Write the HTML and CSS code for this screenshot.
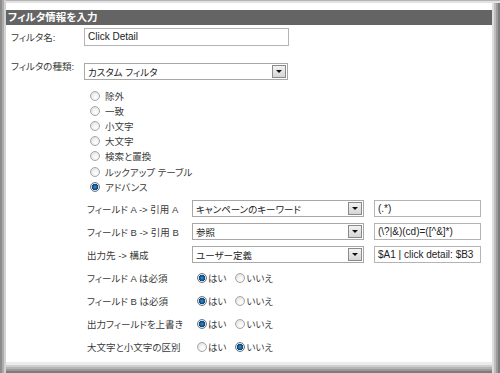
FILE: index.html
```html
<!DOCTYPE html>
<html lang="ja">
<head>
  <meta charset="UTF-8" />
  <title>フィルタ情報を入力</title>
  <link rel="stylesheet" href="styles.css">
</head>
<body>
  <div class="frame">
    <div class="panel">
      <div class="title">フィルタ情報を入力</div>

      <div class="field name-row">
        <span class="label">フィルタ名:</span>
        <div class="textbox wide">Click Detail</div>
      </div>

      <div class="field type-row">
        <span class="label">フィルタの種類:</span>
        <div class="select wide"><span>カスタム フィルタ</span><i class="drop"></i></div>
      </div>

      <ul class="types">
        <li><span class="radio"></span>除外</li>
        <li><span class="radio"></span>一致</li>
        <li><span class="radio"></span>小文字</li>
        <li><span class="radio"></span>大文字</li>
        <li><span class="radio"></span>検索と置換</li>
        <li><span class="radio"></span>ルックアップ テーブル</li>
        <li><span class="radio on"></span>アドバンス</li>
      </ul>

      <div class="advanced">
        <div class="adv-row">
          <span class="adv-label">フィールド A -&gt; 引用 A</span>
          <div class="select mid"><span>キャンペーンのキーワード</span><i class="drop"></i></div>
          <div class="textbox short">(.*)</div>
        </div>
        <div class="adv-row">
          <span class="adv-label">フィールド B -&gt; 引用 B</span>
          <div class="select mid"><span>参照</span><i class="drop"></i></div>
          <div class="textbox short">(\?|&amp;)(cd)=([^&amp;]*)</div>
        </div>
        <div class="adv-row">
          <span class="adv-label">出力先 -&gt; 構成</span>
          <div class="select mid"><span>ユーザー定義</span><i class="drop"></i></div>
          <div class="textbox short">$A1 | click detail: $B3</div>
        </div>
        <div class="adv-row">
          <span class="adv-label">フィールド A は必須</span>
          <div class="choices">
            <span class="choice"><span class="radio on"></span>はい</span>
            <span class="choice"><span class="radio"></span>いいえ</span>
          </div>
        </div>
        <div class="adv-row">
          <span class="adv-label">フィールド B は必須</span>
          <div class="choices">
            <span class="choice"><span class="radio on"></span>はい</span>
            <span class="choice"><span class="radio"></span>いいえ</span>
          </div>
        </div>
        <div class="adv-row">
          <span class="adv-label">出力フィールドを上書き</span>
          <div class="choices">
            <span class="choice"><span class="radio on"></span>はい</span>
            <span class="choice"><span class="radio"></span>いいえ</span>
          </div>
        </div>
        <div class="adv-row">
          <span class="adv-label">大文字と小文字の区別</span>
          <div class="choices">
            <span class="choice"><span class="radio"></span>はい</span>
            <span class="choice"><span class="radio on"></span>いいえ</span>
          </div>
        </div>
      </div>
    </div>
  </div>
</body>
</html>
```

FILE: styles.css
```css
* {
  margin: 0;
  padding: 0;
  box-sizing: border-box;
}
body {
  font-family: "Liberation Sans", "Noto Sans CJK JP", sans-serif;
  font-size: 9.5px;
  font-feature-settings: "palt";
  color: #3a3a3a;
  background: #fff;
}
.frame {
  width: 500px;
  height: 373px;
  padding: 3px 8px 11px 6px;
  background: #fff;
  box-shadow:
    inset 2px 0 0 #8c8c8c,
    inset 4px 0 0 #ababab,
    inset 6px 0 0 #d2d2d2,
    inset 0 1px 0 #b5b5b5,
    inset 0 3px 0 #e2e2e2,
    inset -2px 0 0 #7c7c7c,
    inset -4px 0 0 #9c9c9c,
    inset -6px 0 0 #bdbdbd,
    inset -8px 0 0 #dedede,
    inset 0 -2px 0 #7c7c7c,
    inset 0 -4px 0 #9a9a9a,
    inset 0 -6px 0 #b5b5b5,
    inset 0 -8px 0 #cfcfcf,
    inset 0 -11px 0 #ececec;
}
.panel {
  height: 100%;
  background: #fff;
  padding-top: 7px;
}
.title {
  height: 15px;
  line-height: 15px;
  background: #646464;
  color: #fff;
  font-weight: bold;
  font-size: 10.5px;
  padding-left: 2px;
}
.field {
  display: flex;
  align-items: flex-start;
  padding-left: 5px;
}
.field .label {
  width: 73px;
}
.name-row {
  margin-top: 3px;
  align-items: center;
}
.type-row {
  margin-top: 17px;
}
.type-row .label {
  margin-top: -4px;
}
.textbox {
  height: 18px;
  border: 1px solid #b4b4b4;
  background: #fff;
  padding-left: 3px;
  line-height: 16px;
  font-size: 10px;
  color: #222;
  white-space: nowrap;
  overflow: hidden;
}
.textbox.wide {
  width: 205px;
}
.textbox.short {
  width: 107px;
  height: 17px;
  line-height: 15px;
}
.select {
  display: flex;
  align-items: center;
  justify-content: space-between;
  height: 17px;
  border: 1px solid #a8a8a8;
  background: #fff;
  padding-left: 3px;
  padding-right: 1px;
  color: #222;
}
.select.wide {
  width: 204px;
}
.select.mid {
  width: 172px;
}
.drop {
  position: relative;
  width: 14px;
  height: 13px;
  border: 1px solid #8a8a8a;
  background: linear-gradient(#f2f2f2, #d6d6d6);
}
.drop::after {
  content: "";
  position: absolute;
  left: 3px;
  top: 4px;
  border-left: 3px solid transparent;
  border-right: 3px solid transparent;
  border-top: 3px solid #111;
}
.types {
  list-style: none;
  margin-top: 8px;
  padding-left: 84px;
}
.types li {
  display: flex;
  align-items: center;
  height: 15.2px;
}
.radio {
  display: inline-block;
  width: 10px;
  height: 10px;
  border-radius: 50%;
  border: 1px solid #a6a6a6;
  background: radial-gradient(circle at 60% 65%, #fff 0, #f3f3f3 40%, #d4d4d4 100%);
  margin-right: 5px;
  flex-shrink: 0;
}
.radio.on {
  border-color: #6a7a8a;
  background: radial-gradient(circle at 50% 50%, #2f8fd0 0, #1a5c96 35%, #0f3d66 55%, #e2e6ea 62%, #cfd5da 100%);
}
.advanced {
  margin-top: 3px;
  padding-left: 81px;
}
.adv-row {
  display: flex;
  align-items: center;
  height: 23px;
}
.adv-label {
  width: 105px;
  white-space: nowrap;
}
.adv-row .select {
  margin-right: 10px;
}
.choices {
  display: flex;
  align-items: center;
  padding-left: 5px;
}
.choice {
  display: flex;
  align-items: center;
  margin-right: 9px;
}
.choice .radio {
  margin-right: 1px;
}
```
